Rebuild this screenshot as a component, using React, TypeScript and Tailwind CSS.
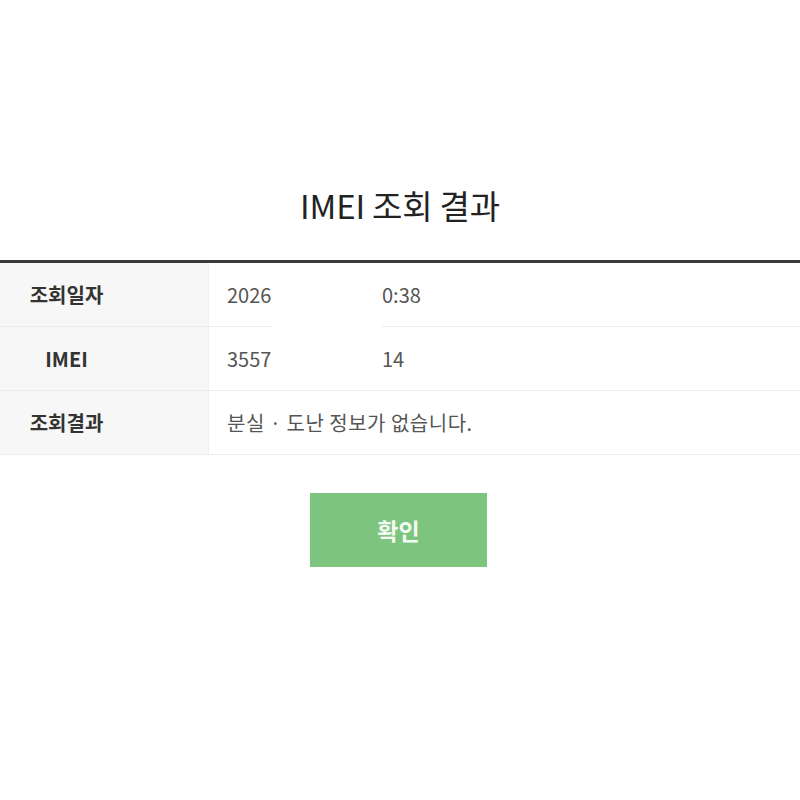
import React from "react";

const font = { fontFamily: '"Noto Sans CJK KR", "Noto Sans", sans-serif' };

const rows = [
  { label: "조회일자", value: ["2026", "0:38"] },
  { label: "IMEI", value: ["3557", "14"] },
];

const App = () => {
  return (
    <div className="w-[800px] h-[800px] bg-white overflow-hidden" style={font}>
      <div className="pt-[182px] text-center text-[33px] leading-[46px] text-[#222] tracking-[-0.2px]">
        IMEI 조회 결과
      </div>

      <div className="relative mt-[32px] border-t-[3px] border-[#3a3a3a]">
        {rows.map((r) => (
          <div key={r.label} className="flex h-[64px] border-b border-[#ececec]">
            <div className="w-[209px] shrink-0 bg-[#f7f7f7] border-r border-[#efefef] flex items-center">
              <div className="w-[133px] text-center text-[20px] font-bold text-[#333]">{r.label}</div>
            </div>
            <div className="flex items-center pl-[18px] text-[20px] text-[#555]">
              <span className="w-[155px]">{r.value[0]}</span>
              <span>{r.value[1]}</span>
            </div>
          </div>
        ))}
        <div className="flex h-[64px] border-b border-[#ececec]">
          <div className="w-[209px] shrink-0 bg-[#f7f7f7] border-r border-[#efefef] flex items-center">
            <div className="w-[133px] text-center text-[20px] font-bold text-[#333]">조회결과</div>
          </div>
          <div className="flex items-center pl-[18px] text-[20px] text-[#555] tracking-[0.5px]">분실 · 도난 정보가 없습니다.</div>
        </div>
        {/* redaction patch */}
        <div className="absolute left-[272px] top-[40px] w-[110px] h-[80px] bg-white" />
      </div>

      <div className="flex mt-[38px] pl-[310px]">
        <button className="w-[177px] h-[74px] bg-[#7dc47f] text-[#f4fbf4] text-[23px] font-bold">확인</button>
      </div>
    </div>
  );
};

export default App;
